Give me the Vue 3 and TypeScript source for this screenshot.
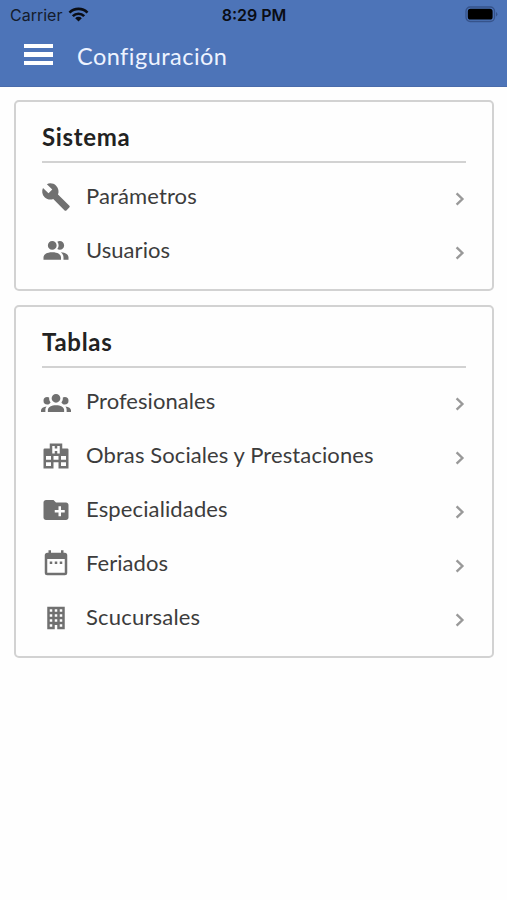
<script setup lang="ts">
interface Item {
  label: string
  icon: string
  tracking: number
}
interface Section {
  title: string
  tracking: number
  items: Item[]
}

const icons: Record<string, string> = {
  wrench:
    'M22.7,19L13.6,9.9C14.5,7.6 14,4.9 12.1,3C10.1,1 7.1,0.6 4.7,1.7L9,6L6,9L1.6,4.7C0.4,7.1 0.9,10.1 2.9,12.1C4.8,14 7.5,14.5 9.8,13.6L18.9,22.7C19.3,23.1 19.9,23.1 20.3,22.7L22.6,20.4C23.1,20 23.1,19.3 22.7,19Z',
  users:
    'M16 17V19H2V17S2 13 9 13 16 17 16 17M12.5 7.5A3.5 3.5 0 1 0 9 11A3.5 3.5 0 0 0 12.5 7.5M15.94 13A5.32 5.32 0 0 1 18 17V19H22V17S22 13.37 15.94 13M15 4A3.39 3.39 0 0 0 13.07 4.59A5 5 0 0 1 13.07 10.41A3.39 3.39 0 0 0 15 11A3.5 3.5 0 0 0 15 4Z',
  group:
    'M12,5.5A3.5,3.5 0 0,1 15.5,9A3.5,3.5 0 0,1 12,12.5A3.5,3.5 0 0,1 8.5,9A3.5,3.5 0 0,1 12,5.5M5,8C5.56,8 6.08,8.15 6.53,8.42C6.38,9.85 6.8,11.27 7.66,12.38C7.16,13.34 6.16,14 5,14A3,3 0 0,1 2,11A3,3 0 0,1 5,8M19,8A3,3 0 0,1 22,11A3,3 0 0,1 19,14C17.84,14 16.84,13.34 16.34,12.38C17.2,11.27 17.62,9.85 17.47,8.42C17.92,8.15 18.44,8 19,8M5.5,18.25C5.5,16.18 8.41,14.5 12,14.5C15.59,14.5 18.5,16.18 18.5,18.25V20H5.5V18.25M0,20V18.5C0,17.11 1.89,15.94 4.45,15.6C3.86,16.28 3.5,17.22 3.5,18.25V20H0M24,20H20.5V18.25C20.5,17.22 20.14,16.28 19.55,15.6C22.11,15.94 24,17.11 24,18.5V20Z',
  hospital:
    'M2,22V7A1,1 0 0,1 3,6H7V2H17V6H21A1,1 0 0,1 22,7V22H14V17H10V22H2M9,4V10H11V8H13V10H15V4H13V6H11V4H9M4,20H8V17H4V20M4,15H8V12H4V15M16,20H20V17H16V20M16,15H20V12H16V15M10,15H14V12H10V15Z',
  folder:
    'M20 6h-8l-2-2H4c-1.11 0-1.99.89-1.99 2L2 18c0 1.11.89 2 2 2h16c1.11 0 2-.89 2-2V8c0-1.11-.89-2-2-2zm-1 8h-3v3h-2v-3h-3v-2h3V9h2v3h3v2z',
  calendar:
    'M9,10H7V12H9V10M13,10H11V12H13V10M17,10H15V12H17V10M19,3H18V1H16V3H8V1H6V3H5C3.89,3 3,3.9 3,5V19A2,2 0 0,0 5,21H19A2,2 0 0,0 21,19V5A2,2 0 0,0 19,3M19,19H5V8H19V19Z',
  building:
    'M5,3V21H11V17.5H13V21H19V3H5M7,5H9V7H7V5M11,5H13V7H11V5M15,5H17V7H15V5M7,9H9V11H7V9M11,9H13V11H11V9M15,9H17V11H15V9M7,13H9V15H7V13M11,13H13V15H11V13M15,13H17V15H15V13M7,17H9V19H7V17M15,17H17V19H15V17Z',
}

const sections: Section[] = [
  {
    title: 'Sistema',
    tracking: 0.65,
    items: [
      { label: 'Parámetros', icon: 'wrench', tracking: 0.12 },
      { label: 'Usuarios', icon: 'users', tracking: 0.05 },
    ],
  },
  {
    title: 'Tablas',
    tracking: 0.7,
    items: [
      { label: 'Profesionales', icon: 'group', tracking: 0.05 },
      { label: 'Obras Sociales y Prestaciones', icon: 'hospital', tracking: 0.1 },
      { label: 'Especialidades', icon: 'folder', tracking: 0.13 },
      { label: 'Feriados', icon: 'calendar', tracking: 0.05 },
      { label: 'Scucursales', icon: 'building', tracking: 0.2 },
    ],
  },
]
</script>

<template>
  <div class="screen">
    <header class="header">
      <div class="status">
        <div class="carrier">
          <span>Carrier</span>
          <svg class="wifi" viewBox="0 0 20 15">
            <g fill="none" stroke="#0a0d14" stroke-width="2.7">
              <path d="M1 5.6a12.8 12.8 0 0 1 18 0" />
              <path d="M4.3 9.1a8.1 8.1 0 0 1 11.4 0" />
            </g>
            <path d="M10 14.6l-3.3-3.4a4.7 4.7 0 0 1 6.6 0z" fill="#0a0d14" />
          </svg>
        </div>
        <span class="time">8:29 PM</span>
        <svg class="battery" viewBox="0 0 33 17">
          <rect x="1" y="1" width="28.5" height="14.5" rx="4.2" fill="none" stroke="#36538b" stroke-width="1.3" />
          <rect x="2.8" y="2.8" width="24.8" height="10.8" rx="2.6" fill="#000" />
          <path d="M31 6v4.6q1.4-.8 1.4-2.3T31 6z" fill="#36538b" />
        </svg>
      </div>
      <div class="nav">
        <button class="menu" aria-label="Menú"><i></i><i></i><i></i></button>
        <h1>Configuración</h1>
      </div>
    </header>

    <main class="content">
      <section v-for="s in sections" :key="s.title" class="card">
        <h2 :style="{ letterSpacing: s.tracking + 'px' }">{{ s.title }}</h2>
        <ul>
          <li v-for="item in s.items" :key="item.label">
            <svg class="icon" viewBox="0 0 24 24"><path :d="icons[item.icon]" /></svg>
            <span class="label" :style="{ letterSpacing: item.tracking + 'px' }">{{ item.label }}</span>
            <svg class="chevron" viewBox="0 0 10 14"><path d="M1.6 1.4 7.4 7l-5.8 5.6" /></svg>
          </li>
        </ul>
      </section>
    </main>
  </div>
</template>

<style>
body {
  background: #fefefe;
}
</style>

<style scoped>
.screen {
  min-height: 900px;
  font-family: Lato, 'Open Sans', sans-serif;
  color: #3c3c3c;
}
.header {
  box-sizing: border-box;
  height: 87px;
  background: #4d74b8;
  border-bottom: 1px solid #4a6cab;
}
.status {
  display: grid;
  grid-template-columns: 1fr auto 1fr;
  align-items: center;
  height: 29px;
  padding: 0 9px 0 10px;
  font-family: Inter, sans-serif;
  font-size: 16px;
  color: #141c2c;
}
.carrier {
  display: flex;
  align-items: center;
  gap: 6px;
}
.wifi {
  width: 21px;
  height: 15px;
}
.time {
  font-weight: 600;
  color: #0a0d14;
}
.battery {
  justify-self: end;
  width: 33px;
  height: 17px;
}
.nav {
  display: flex;
  align-items: center;
  height: 53px;
  padding-left: 24px;
  gap: 24px;
}
.menu {
  display: flex;
  flex-direction: column;
  gap: 4px;
  width: 29px;
  margin-bottom: 2px;
  padding: 0;
  border: 0;
  background: none;
}
.menu i {
  height: 4.4px;
  background: #fff;
}
h1 {
  margin: 0;
  font-size: 23.5px;
  font-weight: 400;
  letter-spacing: 0.47px;
  font-variant-ligatures: common-ligatures;
  color: #edf3ff;
}
.content {
  display: flex;
  flex-direction: column;
  gap: 14px;
  padding: 13px 13px 0 14px;
}
.card {
  box-sizing: border-box;
  padding: 0 26px 12px;
  border: 2px solid #d2d2d2;
  border-radius: 5px;
}
h2 {
  box-sizing: border-box;
  height: 61px;
  margin: 0;
  padding-top: 20px;
  border-bottom: 2px solid #d2d2d2;
  font-size: 24px;
  line-height: 30px;
  font-weight: 700;
  color: #222;
}
ul {
  margin: 0;
  padding: 6px 0 0;
  list-style: none;
}
li {
  display: flex;
  align-items: center;
  height: 54px;
}
.icon {
  width: 30px;
  height: 30px;
  margin: 1px 0 0 -1px;
  fill: #707070;
}
.label {
  flex: 1;
  margin: -2px 0 0 15px;
  font-size: 22px;
  white-space: nowrap;
}
.chevron {
  width: 10px;
  height: 14px;
  margin: 5px 1px 0 0;
  fill: none;
  stroke: #999;
  stroke-width: 2.4;
}
</style>
